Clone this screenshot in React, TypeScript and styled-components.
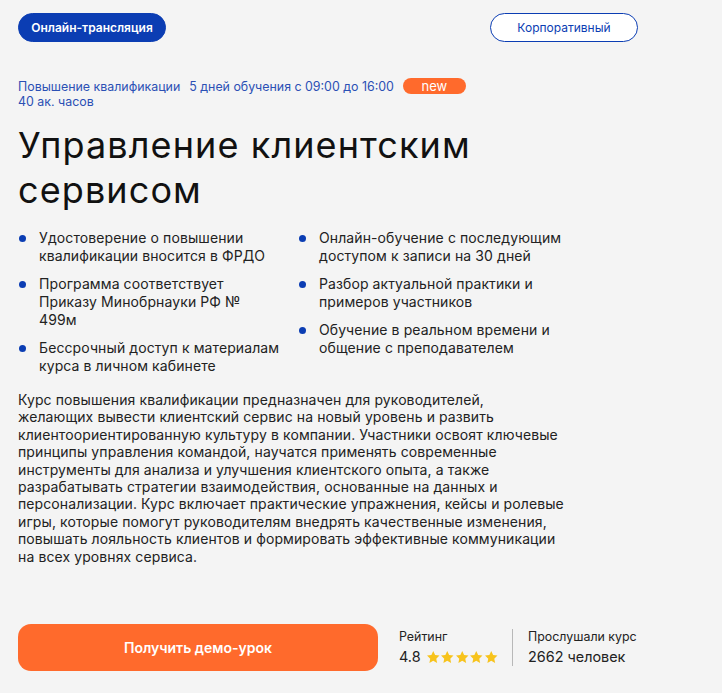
import styled, { createGlobalStyle } from "styled-components";

const GlobalStyle = createGlobalStyle`
  * { box-sizing: border-box; }
  html, body {
    margin: 0;
    padding: 0;
    background: #f4f4f4;
  }
  body {
    font-family: Inter, "Noto Sans", sans-serif;
    color: #1a1a1a;
  }
`;

const Page = styled.div`
  width: 722px;
  min-height: 693px;
  padding: 13px 0 0 18px;
`;

const TopRow = styled.div`
  width: 620px;
  display: flex;
  justify-content: space-between;
  align-items: center;
`;

const Pill = styled.div<{ $outline?: boolean }>`
  width: 148px;
  height: 29px;
  border-radius: 15px;
  display: flex;
  align-items: center;
  justify-content: center;
  font-size: 12px;
  font-weight: ${(p) => (p.$outline ? 400 : 600)};
  color: ${(p) => (p.$outline ? "#0b3db3" : "#fff")};
  background: ${(p) => (p.$outline ? "#fff" : "#0b3db3")};
  border: 1px solid #0b3db3;
`;

const Meta = styled.div`
  margin-top: 36px;
  font-size: 12.4px;
  line-height: 15px;
  color: #2b50b4;
`;

const MetaLine = styled.div`
  display: flex;
  align-items: center;
  gap: 9px;
`;

const NewBadge = styled.span`
  width: 63px;
  height: 16px;
  border-radius: 8px;
  background: #ff6a2c;
  color: #fff;
  font-size: 13px;
  display: inline-flex;
  align-items: center;
  justify-content: center;
`;

const Title = styled.h1`
  margin: 14px 0 0;
  font-size: 36px;
  font-weight: 400;
  line-height: 45px;
  color: #111;
  letter-spacing: 1.1px;
`;

const Features = styled.div`
  margin-top: 16px;
  display: flex;
  gap: 18px;
`;

const Column = styled.ul<{ $width: number }>`
  list-style: none;
  margin: 0;
  padding: 0;
  width: ${(p) => p.$width}px;
  display: flex;
  flex-direction: column;
  gap: 10px;
`;

const Feature = styled.li`
  position: relative;
  padding-left: 21px;
  font-size: 14px;
  line-height: 18px;
  letter-spacing: 0.1px;
  color: #222;
  &::before {
    content: "";
    position: absolute;
    left: 1px;
    top: 6px;
    width: 7px;
    height: 7px;
    border-radius: 50%;
    background: #0b3db3;
  }
`;

const Description = styled.p`
  margin: 16px 0 0;
  width: 560px;
  font-size: 14px;
  line-height: 17.4px;
  letter-spacing: 0.1px;
  color: #222;
`;

const Bottom = styled.div`
  margin-top: 59px;
  display: flex;
  align-items: center;
`;

const DemoButton = styled.button`
  width: 360px;
  height: 47px;
  border: none;
  border-radius: 13px;
  background: #ff6a2c;
  color: #fff;
  font-family: inherit;
  font-size: 14px;
  font-weight: 600;
  cursor: pointer;
`;

const Stat = styled.div`
  padding: 0 14px 0 21px;
  display: flex;
  flex-direction: column;
  gap: 4px;
  & + & {
    border-left: 1px solid #b8b8b8;
    padding-left: 15px;
  }
`;

const StatLabel = styled.div`
  font-size: 12.4px;
  line-height: 15px;
  color: #222;
`;

const StatValue = styled.div`
  font-size: 14.4px;
  line-height: 18px;
  color: #222;
  display: flex;
  align-items: center;
  gap: 5px;
`;

const Stars = styled.div`
  display: flex;
`;

const Star = () => (
  <svg width="14.5" height="14.5" viewBox="0 0 24 24">
    <path
      d="M12 1.8l3.1 6.6 7.2.9-5.3 5 1.4 7.1L12 17.9l-6.4 3.5 1.4-7.1-5.3-5 7.2-.9z"
      fill="#f7c31c"
    />
  </svg>
);

const leftFeatures = [
  "Удостоверение о повышении квалификации вносится в ФРДО",
  "Программа соответствует Приказу Минобрнауки РФ № 499м",
  "Бессрочный доступ к материалам курса в личном кабинете",
];

const rightFeatures = [
  "Онлайн-обучение с последующим доступом к записи на 30 дней",
  "Разбор актуальной практики и примеров участников",
  "Обучение в реальном времени и общение с преподавателем",
];

const descriptionLines = [
  "Курс повышения квалификации предназначен для руководителей,",
  "желающих вывести клиентский сервис на новый уровень и развить",
  "клиентоориентированную культуру в компании. Участники освоят ключевые",
  "принципы управления командой, научатся применять современные",
  "инструменты для анализа и улучшения клиентского опыта, а также",
  "разрабатывать стратегии взаимодействия, основанные на данных и",
  "персонализации. Курс включает практические упражнения, кейсы и ролевые",
  "игры, которые помогут руководителям внедрять качественные изменения,",
  "повышать лояльность клиентов и формировать эффективные коммуникации",
  "на всех уровнях сервиса.",
];

export default function App() {
  return (
    <>
      <GlobalStyle />
      <Page>
        <TopRow>
          <Pill>Онлайн-трансляция</Pill>
          <Pill $outline>Корпоративный</Pill>
        </TopRow>
        <Meta>
          <MetaLine>
            <span>Повышение квалификации</span>
            <span>5 дней обучения с 09:00 до 16:00</span>
            <NewBadge>new</NewBadge>
          </MetaLine>
          <div>40 ак. часов</div>
        </Meta>
        <Title>
          Управление клиентским
          <br />
          сервисом
        </Title>
        <Features>
          <Column $width={262}>
            {leftFeatures.map((f) => (
              <Feature key={f}>{f}</Feature>
            ))}
          </Column>
          <Column $width={290}>
            {rightFeatures.map((f) => (
              <Feature key={f}>{f}</Feature>
            ))}
          </Column>
        </Features>
        <Description>
          {descriptionLines.map((line, i) => (
            <span key={i}>
              {line}
              {i < descriptionLines.length - 1 && <br />}
            </span>
          ))}
        </Description>
        <Bottom>
          <DemoButton>Получить демо-урок</DemoButton>
          <Stat>
            <StatLabel>Рейтинг</StatLabel>
            <StatValue>
              4.8
              <Stars>
                {[0, 1, 2, 3, 4].map((i) => (
                  <Star key={i} />
                ))}
              </Stars>
            </StatValue>
          </Stat>
          <Stat>
            <StatLabel>Прослушали курс</StatLabel>
            <StatValue>2662 человек</StatValue>
          </Stat>
        </Bottom>
      </Page>
    </>
  );
}
